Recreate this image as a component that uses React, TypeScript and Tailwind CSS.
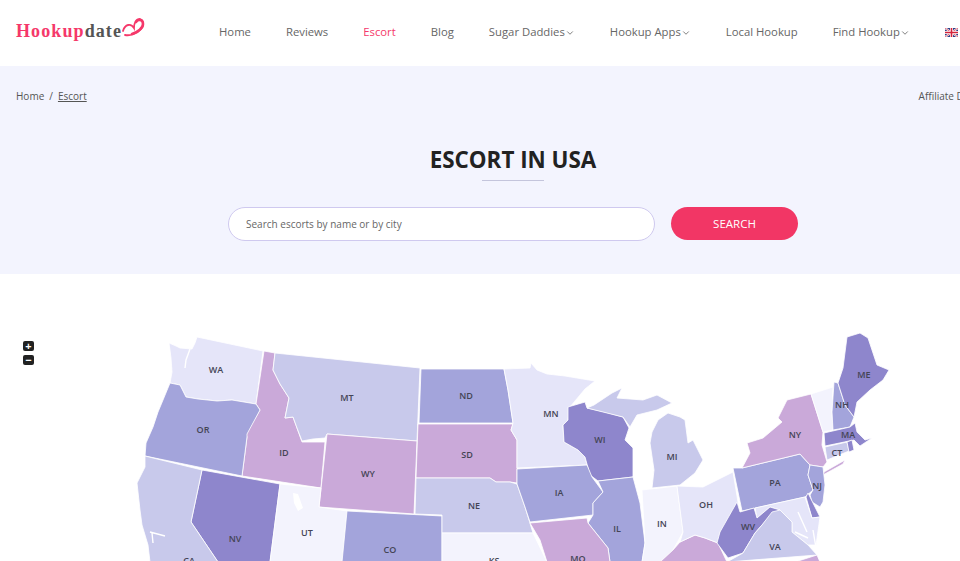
import React from "react";
import { ChevronDown } from "lucide-react";

const C = { a: "#e5e5f9", b: "#c8c9eb", c: "#a3a4db", d: "#8e86cc", e: "#caa9d9", f: "#f3f3fd" };

const states: [string, string][] = [
  [C.a, "197,337 263,351 256,404 232,400 217,401 198,399 186,397 180,385 170,383 172,372 171,358 169,343 176,346 180,348 192,349 195,343"],
  [C.e, "264,351 275,353 273,370 280,384 289,398 285,418 293,417 297,428 302,442 325,442 321,488 242,476 247,437 246,434 260,410 256,404"],
  [C.b, "275,353 420,368 417,441 327,434 325,438 313,439 302,441 297,428 293,417 285,418 289,398 280,384 273,370"],
  [C.c, "170,383 180,385 186,397 198,399 217,401 232,400 256,404 260,410 247,434 247,437 242,476 145,456 146,443 153,427 158,412 163,400"],
  [C.e, "327,434 417,441 414,514 319,507"],
  [C.d, "202,470 280,484 270,562 218,562 191,522"],
  [C.b, "145,456 202,470 191,522 218,562 150,562 148,545 142,525 140,510 137,483 145,467"],
  [C.f, "280,484 321,488 319,507 347,511 342,562 270,562"],
  [C.c, "347,511 442,516 442,562 342,562"],
  [C.c, "421,369 504,369 508,390 513,423 419,423"],
  [C.e, "418,424 513,424 511,430 517,440 517,483 510,482 496,482 490,478 416,478"],
  [C.b, "416,478 490,478 496,482 510,482 517,484 525,507 533,533 442,533 442,515 415,514"],
  [C.f, "442,533 533,533 547,562 442,562"],
  [C.a, "504,369 530,368 531,363 537,370 547,374 565,376 595,381 585,389 570,407 568,420 563,425 564,442 578,450 585,457 587,465 517,468 517,440 511,430 513,423 508,390"],
  [C.d, "568,407 585,402 587,408 605,412 623,417 629,428 625,440 633,448 633,477 598,481 590,475 585,457 578,450 564,442 563,425 568,420"],
  [C.c, "517,469 587,465 592,477 603,492 593,503 593,515 530,522 525,507 517,484"],
  [C.c, "598,481 633,477 640,503 645,543 642,562 610,562 608,548 588,523 593,515 593,503 603,492"],
  [C.e, "530,523 587,518 588,523 608,548 610,562 547,562 540,540"],
  [C.f, "642,490 677,486 683,532 673,550 660,562 642,562 645,543"],
  [C.e, "660,562 673,550 680,542 695,535 705,538 718,543 727,562"],
  [C.b, "650,443 652,432 658,420 668,413 680,417 685,420 688,443 693,440 703,460 695,473 680,485 652,488 654,470"],
  [C.b, "594,405 612,393 622,388 617,398 643,400 657,395 672,403 657,410 637,415 630,427 623,417 587,408"],
  [C.a, "677,486 703,487 733,472 738,502 740,512 720,532 718,543 705,538 695,535 680,542 683,532"],
  [C.c, "733,468 742,468 800,454 810,465 808,475 813,490 805,497 742,511"],
  [C.e, "742,468 750,453 747,443 763,438 782,422 778,418 787,400 811,394 823,432 822,445 827,462 823,467 810,465 800,454"],
  [C.f, "811,394 833,387 832,412 833,430 823,432"],
  [C.c, "834,382 838,383 845,405 854,417 850,427 833,430 832,412"],
  [C.d, "847,337 860,333 868,338 877,365 889,370 883,380 870,390 857,402 854,417 845,405 838,383 843,368"],
  [C.d, "824,433 850,427 855,423 857,432 865,440 872,438 860,446 854,440 825,446"],
  [C.b, "825,447 847,442 849,451 827,460"],
  [C.d, "847,442 852,440 854,450 849,452"],
  [C.e, "824,472 845,460 843,464 823,475"],
  [C.c, "810,465 823,467 825,485 823,502 820,507 812,502 810,495 813,490 808,475"],
  [C.d, "806,497 808,493 820,517 812,518"],
  [C.a, "755,508 805,497 812,518 820,517 816,545 808,545 792,532 792,522 780,510 770,507 757,518"],
  [C.d, "737,502 740,512 754,508 757,518 770,507 780,510 772,514 762,525 755,533 743,553 728,558 717,543 720,532"],
  [C.b, "772,512 780,510 792,522 792,532 808,545 817,555 727,562 743,553 755,533 762,525"],
  [C.e, "795,562 817,555 820,562"],
];

const labels: [string, number, number][] = [
  ["WA", 216, 370], ["MT", 347, 398], ["ND", 466, 396], ["MN", 551, 414], ["ME", 864, 375], ["OR", 203, 430],
  ["ID", 284, 453], ["WY", 368, 474], ["SD", 467, 455], ["NE", 474, 506], ["IA", 559, 493], ["WI", 600, 440],
  ["MI", 672, 457], ["NY", 795, 435], ["MA", 848, 435], ["NH", 842, 405], ["CT", 837, 453], ["PA", 775, 483],
  ["NJ", 817, 486], ["OH", 706, 505], ["IN", 662, 524], ["IL", 617, 529], ["WV", 748, 527], ["VA", 775, 547],
  ["UT", 307, 533], ["NV", 235, 539], ["CO", 390, 550], ["CA", 189, 561], ["KS", 494, 561], ["MO", 578, 559],
];

const nav: [string, boolean, boolean][] = [
  ["Home", false, false], ["Reviews", false, false], ["Escort", true, false], ["Blog", false, false],
  ["Sugar Daddies", false, true], ["Hookup Apps", false, true], ["Local Hookup", false, false], ["Find Hookup", false, true],
];

function Flag() {
  return (
    <svg width="13" height="9" viewBox="0 0 13 9" className="shrink-0">
      <rect width="13" height="9" rx="1" fill="#2b3f86" />
      <path d="M0 0L13 9M13 0L0 9" stroke="#fff" strokeWidth="2" />
      <path d="M0 0L13 9M13 0L0 9" stroke="#d2233c" strokeWidth="0.7" />
      <path d="M6.5 0V9M0 4.5H13" stroke="#fff" strokeWidth="3" />
      <path d="M6.5 0V9M0 4.5H13" stroke="#d2233c" strokeWidth="1.6" />
    </svg>
  );
}

export default function App() {
  return (
    <div className="w-[960px] h-[561px] overflow-hidden bg-white font-['Open_Sans',sans-serif]">
      <header className="h-[66px] flex items-center w-[1040px]">
        <div className="flex items-center w-[219px] pl-4 pb-[5px]">
          <span className="font-['Liberation_Serif',serif] font-bold text-[18px] leading-none tracking-[1.1px] text-[#f5386a]">
            Hookup<span className="text-[#555]">date</span>
          </span>
          <svg width="24" height="22" viewBox="0 0 24 22" className="-mt-[5px] -ml-[1px]">
            <path
              d="M2 14 C4 7 10 6 13 11 C13 6 15 2 19 2 C23 3 23 9 20 12 C16 17 9 19 4 18"
              fill="none"
              stroke="#f5386a"
              strokeWidth="1.8"
              strokeLinecap="round"
            />
            <path d="M15 5 C17 2 22 2 22 7 C22 11 17 15 11 17" fill="none" stroke="#f5386a" strokeWidth="2.6" strokeLinecap="round" />
          </svg>
        </div>
        <nav className="flex items-center gap-[35px] text-[11.3px] text-[#666] pb-[2px]">
          {nav.map(([t, active, chev]) => (
            <span key={t} className={`flex items-center whitespace-nowrap ${active ? "text-[#f5386a]" : ""}`}>
              {t}
              {chev && <ChevronDown size={10} strokeWidth={2} className="mt-[1px]" />}
            </span>
          ))}
          <span className="flex items-center gap-[4px]">
            <Flag />
            English
          </span>
        </nav>
      </header>

      <section className="h-[208px] bg-[#f3f4fe] px-4">
        <div className="w-[989px] flex justify-between pt-[23px] text-[10px] leading-[15px] text-[#555]">
          <div className="flex">
            <span>Home</span>
            <span className="mx-[5px]">/</span>
            <span className="underline">Escort</span>
          </div>
          <span className="whitespace-nowrap">Affiliate Disclosure</span>
        </div>
        <div className="flex flex-col items-center pt-[41px] w-[994px]">
          <h1 className="text-[22.4px] leading-[30px] font-bold text-[#222] whitespace-nowrap">ESCORT IN USA</h1>
          <div className="w-[62px] h-px bg-[#c4c5dc] mt-[5px]" />
        </div>
        <div className="flex items-start gap-4 pl-[212px] mt-[26px]">
          <div className="w-[427px] h-[34px] rounded-full bg-white border border-[#cfc9ef] flex items-center pl-[17px] text-[10px] text-[#666]">
            Search escorts by name or by city
          </div>
          <button className="w-[127px] h-[33px] rounded-full bg-[#f23665] text-white text-[11.5px]">SEARCH</button>
        </div>
      </section>

      <section className="relative h-[287px]">
        <div className="absolute left-[23px] top-[67px] flex flex-col gap-[4px]">
          <div className="w-[11px] h-[10px] rounded-[2px] bg-[#222] text-white text-[11px] leading-[9px] font-bold text-center">+</div>
          <div className="w-[11px] h-[10px] rounded-[2px] bg-[#222] text-white text-[11px] leading-[9px] font-bold text-center">−</div>
        </div>
        <svg width="960" height="287" viewBox="0 274 960 287" className="block">
          {states.map(([fill, pts], i) => (
            <polygon key={i} points={pts} fill={fill} stroke="#fff" strokeWidth="0.8" strokeLinejoin="round" />
          ))}
          <polygon points="293,493 298,494 303,508 298,511 294,503" fill="#fff" />
          <path
            d="M150,532 L165,536 M152,533 L153,543 M190,349 L186,360 L185,368 M798,512 L807,532 M795,532 L808,538 M813,530 L816,548"
            fill="none"
            stroke="#fff"
            strokeWidth="1.4"
          />
          {labels.map(([t, x, y]) => (
            <text key={t} x={x} y={y + 3} textAnchor="middle" className="text-[9px] font-semibold fill-[#444455]">
              {t}
            </text>
          ))}
        </svg>
      </section>
    </div>
  );
}
